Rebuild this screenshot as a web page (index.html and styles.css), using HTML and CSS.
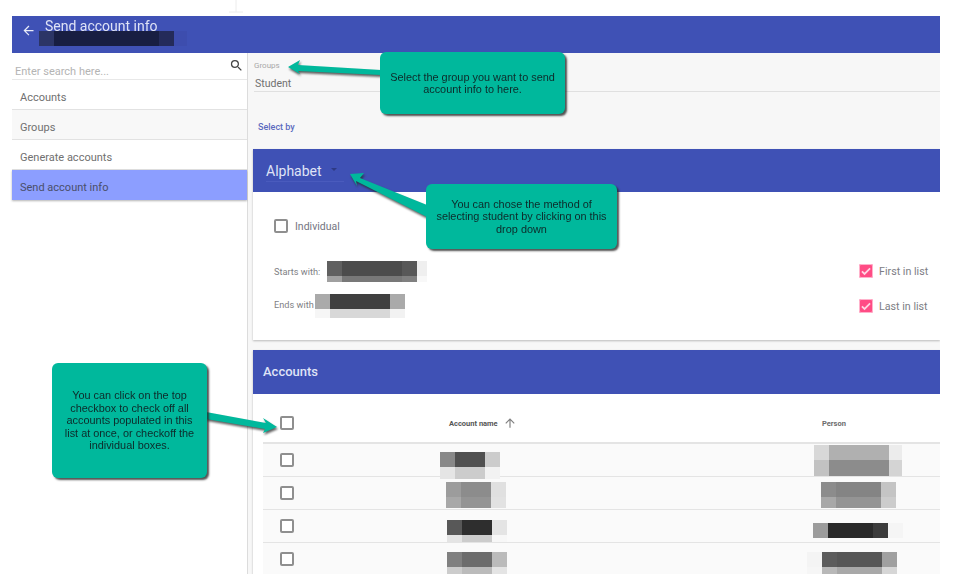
FILE: index.html
```html
<!DOCTYPE html>
<html lang="en">
<head>
<meta charset="utf-8">
<title>Send account info</title>
<link rel="stylesheet" href="styles.css">
</head>
<body>
<div class="page">
  <div class="app">
    <header class="topbar">
      <svg class="back" viewBox="0 0 24 24" width="15" height="15"><path d="M20 11H7.8l5.6-5.6L12 4l-8 8 8 8 1.4-1.4L7.8 13H20z"/></svg>
      <div class="topbar-title">
        <div class="title">Send account info</div>
        <div class="mosaic m-head"><i class="h1"></i><i class="h2"></i><i class="h3"></i><i class="h4"></i></div>
      </div>
    </header>
    <div class="layout">
      <aside class="sidebar">
        <div class="search">
          <span class="search-hint">Enter search here...</span>
          <svg viewBox="0 0 24 24" width="15" height="15"><path d="M15.5 14h-.79l-.28-.27A6.471 6.471 0 0 0 16 9.5 6.5 6.5 0 1 0 9.5 16c1.61 0 3.09-.59 4.23-1.57l.27.28v.79l5 4.99L20.49 19l-4.99-5zm-6 0C7.01 14 5 11.99 5 9.5S7.01 5 9.5 5 14 7.01 14 9.5 11.99 14 9.5 14z"/></svg>
        </div>
        <nav>
          <div class="nav-item">Accounts</div>
          <div class="nav-item nav-alt">Groups</div>
          <div class="nav-item">Generate accounts</div>
          <div class="nav-item nav-active">Send account info</div>
        </nav>
      </aside>
      <main class="main">
        <section class="group-field">
          <div class="field-label">Groups</div>
          <div class="field-value">Student</div>
        </section>
        <div class="select-by">Select by</div>
        <section class="card card-filter">
          <div class="card-head head-alpha">
            <div class="dropdown"><span>Alphabet</span><i class="caret"></i></div>
          </div>
          <div class="filter-body">
            <label class="check-row"><i class="box"></i><span>Individual</span></label>
            <div class="range-row row-first">
              <div class="range-left">
                <span class="range-label">Starts with:</span>
                <div class="mosaic m-start">
                  <i class="g60"></i><i class="g4c"></i><i class="g58"></i><i class="gef"></i>
                  <i class="ga0"></i><i class="g78"></i><i class="g80"></i><i class="gf8"></i>
                </div>
              </div>
              <label class="pink-row"><i class="pink"><svg viewBox="0 0 24 24"><path d="M5 12.5l4.5 4.5L19 7.5"/></svg></i><span>First in list</span></label>
            </div>
            <div class="range-row row-last">
              <div class="range-left">
                <span class="range-label">Ends with</span>
                <div class="mosaic m-end">
                  <i class="gaa"></i><i class="g40"></i><i class="gaa"></i>
                  <i class="gf6"></i><i class="gd8"></i><i class="gf2"></i>
                </div>
              </div>
              <label class="pink-row"><i class="pink"><svg viewBox="0 0 24 24"><path d="M5 12.5l4.5 4.5L19 7.5"/></svg></i><span>Last in list</span></label>
            </div>
          </div>
        </section>
        <section class="card card-accounts">
          <div class="card-head head-accounts">Accounts</div>
          <div class="table">
            <div class="tr th">
              <i class="box"></i>
              <div class="name-cell"><span>Account name</span><svg viewBox="0 0 24 24" width="14" height="14"><path d="M4 12l1.4 1.4L11 7.8V20h2V7.8l5.6 5.6L20 12l-8-8z"/></svg></div>
              <div class="person-cell">Person</div>
            </div>
            <div class="tr">
              <i class="box"></i>
              <div class="mosaic mn mn1"><i class="g88"></i><i class="g50"></i><i class="g50"></i><i class="gcc"></i><i class="ge5"></i><i class="gcc"></i><i class="gcc"></i><i class="gf2"></i></div>
              <div class="mosaic mp mp1"><i class="gd8"></i><i class="gb0"></i><i class="gec"></i><i class="gc2"></i><i class="g8c"></i><i class="gd4"></i></div>
            </div>
            <div class="tr">
              <i class="box"></i>
              <div class="mosaic mn mn2"><i class="g9c"></i><i class="g8c"></i><i class="g8c"></i><i class="ge0"></i><i class="ga8"></i><i class="g94"></i><i class="g94"></i><i class="ge2"></i></div>
              <div class="mosaic mp mp2"><i class="g8c"></i><i class="g84"></i><i class="gc4"></i><i class="ga8"></i><i class="g94"></i><i class="gcc"></i></div>
            </div>
            <div class="tr">
              <i class="box"></i>
              <div class="mosaic mn mn3"><i class="g58"></i><i class="g2e"></i><i class="g2e"></i><i class="ge4"></i><i class="ge4"></i><i class="gcc"></i><i class="gcc"></i><i class="gf7"></i></div>
              <div class="mosaic mp mp3"><i class="g9c"></i><i class="g2a"></i><i class="g3c"></i><i class="gf5"></i></div>
            </div>
            <div class="tr">
              <i class="box"></i>
              <div class="mosaic mn mn4"><i class="g80"></i><i class="g6c"></i><i class="g6c"></i><i class="gbb"></i><i class="gcc"></i><i class="gbb"></i><i class="gbb"></i><i class="ge4"></i></div>
              <div class="mosaic mp mp4"><i class="gf4"></i><i class="g5c"></i><i class="g56"></i><i class="ga0"></i><i class="gf6"></i><i class="gb8"></i><i class="ga8"></i><i class="gd6"></i></div>
            </div>
          </div>
        </section>
      </main>
    </div>
  </div>

  <svg class="arrows" viewBox="0 0 956 580" width="956" height="580">
    <path class="stem" d="M236 0V12M229 12H243"/>
    <polygon class="arrow" points="288,67 300,60 298,65 381,70 381,75 298,71 300,74"/>
    <polygon class="arrow" points="350,174 364,173 360,178 427,205 427,217 356,181 357,186"/>
    <polygon class="arrow" points="206,412 266,423 263,418 277,427 263,433 265,429 206,419"/>
  </svg>
  <div class="callout callout-group">Select the group you want to send<br>account info to here.</div>
  <div class="callout callout-method">You can chose the method of<br>selecting student by clicking on this<br>drop down</div>
  <div class="callout callout-top">You can click on the top<br>checkbox to check off all<br>accounts populated in this<br>list at once, or checkoff the<br>individual boxes.</div>
</div>
</body>
</html>
```

FILE: styles.css
```css
* { box-sizing: border-box; }
html, body { margin: 0; padding: 0; background: #fff; }
body { font-family: Roboto, "Liberation Sans", sans-serif; color: #616161; }
i { display: block; font-style: normal; }

.page { position: relative; width: 956px; height: 580px; overflow: hidden; }
.app { margin: 16px 16px 0 12px; height: 558px; display: flex; flex-direction: column; filter: blur(.5px); }

/* top bar */
.topbar { height: 37px; flex: none; background: #3f51b5; display: flex; align-items: flex-start; padding-left: 9px; }
.back { fill: #e8ebf8; margin-top: 7px; flex: none; }
.topbar-title { margin-left: 3px; position: relative; }
.title { font-size: 14px; line-height: 16px; color: #dfe3f6; margin: 2px 0 0 6px; }
.m-head { grid-template-columns: 15px 105px 15px 13px; grid-template-rows: 15px; margin-top: -3px; }
.h1 { background: #2c3566; } .h2 { background: #181e42; } .h3 { background: #242b5a; } .h4 { background: #3d4dae; }

.layout { flex: 1; min-height: 0; display: flex; }

/* sidebar */
.sidebar { width: 236px; flex: none; background: #fff; border-right: 1px solid #dcdcdc; }
.search { height: 27px; display: flex; align-items: flex-start; justify-content: space-between; padding: 0 3px 0 3px; border-bottom: 1px solid #e8e8e8; }
.search-hint { font-size: 11px; line-height: 14px; color: #b4b4b4; margin-top: 12px; }
.search svg { fill: #444; margin-top: 5px; }
.nav-item { height: 30px; display: flex; align-items: center; padding: 5px 0 0 8px; font-size: 11px; color: #707070; border-bottom: 1px solid #e2e2e2; }
.nav-alt { background: #f8f8f8; }
.nav-active { height: 30px; padding-top: 4px; background: #8c9eff; color: #4a4f6a; border-bottom: 0; box-shadow: 0 1px 2px rgba(0,0,0,.3); }

/* main */
.main { flex: 1; min-width: 0; background: #f7f7f7; padding-left: 5px; overflow: hidden; }
.group-field { margin: 0 0 0 1px; height: 39px; border-bottom: 1px solid #e0e0e0; padding-top: 8px; }
.field-label { font-size: 8px; line-height: 10px; color: #a8a8a8; }
.field-value { font-size: 10.5px; line-height: 14px; color: #707070; margin-top: 6px; padding-left: 1px; }
.select-by { font-size: 9px; font-weight: 500; line-height: 12px; color: #5c6bc0; margin: 29px 0 0 5px; height: 28px; }

.card { background: #fff; box-shadow: 0 1px 2px rgba(0,0,0,.25); }
.card-head { background: #3f51b5; color: #dfe3f6; display: flex; align-items: center; }
.head-alpha { height: 43px; padding-left: 13px; }
.dropdown { display: flex; align-items: center; width: 78px; height: 22px; font-size: 14px; border-bottom: 1px solid #4a5bbd; margin-top: 1px; }
.caret { width: 0; height: 0; margin: 0 0 0 9px; border: 3px solid transparent; border-top-color: #2e3a84; }

.card-filter { height: 191px; }
.filter-body { position: relative; padding: 27px 12px 0 21px; }
.box { width: 14px; height: 14px; flex: none; border: 2px solid #8f8f8f; border-radius: 2px; background: #fff; }
.check-row { display: flex; align-items: center; gap: 7px; font-size: 10.5px; color: #74757f; }
.range-row { display: flex; justify-content: space-between; align-items: center; }
.row-first { margin-top: 27px; height: 22px; }
.row-last { margin-top: 12px; height: 24px; }
.range-left { display: flex; align-items: flex-start; }
.range-label { font-size: 9.2px; line-height: 12px; color: #7f7f85; white-space: nowrap; }
.row-first .range-label { margin-top: 5px; }
.row-last .range-label { margin-top: 4px; }
.pink-row { display: flex; align-items: center; gap: 6px; font-size: 10.7px; color: #7c7d84; width: 69px; white-space: nowrap; }
.pink { width: 14px; height: 14px; flex: none; border-radius: 2px; background: #ff4c85; box-shadow: 0 0 0 1px #ffb3cc inset; }
.pink svg { display: block; fill: none; stroke: #ffd5e3; stroke-width: 3; }

/* pixelated redactions */
.mosaic { display: grid; flex: none; }
.m-start { grid-template-columns: 15px 60px 15px 10px; grid-template-rows: 15px 6px; margin-left: 7px; }
.m-end { grid-template-columns: 15px 60px 15px; grid-template-rows: 15px 9px; margin-left: 1px; margin-top: -1px; }
.g2a { background: #2a2a2a; } .g2e { background: #2e2e2e; } .g3c { background: #3c3c3c; } .g40 { background: #404040; }
.g4c { background: #4c4c4c; } .g50 { background: #505050; } .g56 { background: #565656; } .g58 { background: #585858; }
.g5c { background: #5c5c5c; } .g60 { background: #606060; } .g6c { background: #6c6c6c; } .g78 { background: #787878; }
.g80 { background: #808080; } .g84 { background: #848484; } .g88 { background: #888; } .g8c { background: #8c8c8c; }
.g94 { background: #949494; } .g9c { background: #9c9c9c; } .ga0 { background: #a0a0a0; } .ga8 { background: #a8a8a8; }
.gaa { background: #aaa; } .gb0 { background: #b0b0b0; } .gb8 { background: #b8b8b8; } .gbb { background: #bbb; }
.gc2 { background: #c2c2c2; } .gc4 { background: #c4c4c4; } .gcc { background: #ccc; } .gd4 { background: #d4d4d4; }
.gd6 { background: #d6d6d6; } .gd8 { background: #d8d8d8; } .ge0 { background: #e0e0e0; } .ge2 { background: #e2e2e2; }
.ge4 { background: #e4e4e4; } .ge5 { background: #e5e5e5; } .gec { background: #ececec; } .gef { background: #efefef; }
.gf2 { background: #f2f2f2; } .gf4 { background: #f4f4f4; } .gf5 { background: #f5f5f5; } .gf6 { background: #f6f6f6; }
.gf7 { background: #f7f7f7; } .gf8 { background: #f8f8f8; }

/* accounts table */
.card-accounts { margin-top: 10px; height: 240px; }
.head-accounts { height: 44px; padding: 0 0 2px 10px; font-size: 13px; font-weight: 500; }
.table { padding-left: 10px; background: #fff; }
.tr { height: 33px; display: flex; align-items: flex-start; background: #fafafa; border-bottom: 1px solid #e4e4e4; padding-left: 17px; }
.tr .box { margin-top: 9px; }
.th { height: 50px; align-items: center; background: #fff; border-bottom: 2px solid #e4e4e4; }
.th .box { margin-top: 10px; }
.name-cell { display: flex; align-items: center; gap: 5px; margin-left: 155px; width: 373px; font-size: 7.5px; font-weight: 700; color: #555; margin-top: 10px; }
.name-cell svg { fill: #808080; }
.person-cell { font-size: 7.5px; font-weight: 700; color: #6c6c6c; margin-top: 10px; }

.mn { grid-template-columns: repeat(4, 15px); width: 60px; }
.mn1 { grid-template-rows: 15px 12px; margin: 8px 0 0 146px; }
.mn2 { grid-template-rows: 15px 11px; margin: 5px 0 0 152px; }
.mn3 { grid-template-rows: 15px 7px; margin: 10px 0 0 153px; }
.mn4 { grid-template-rows: 15px 8px; margin: 9px 0 0 153px; }
.mp1 { grid-template-columns: 15px 60px 13px; grid-template-rows: 15px 16px; margin: 1px 0 0 314px; }
.mp2 { grid-template-columns: 15px 45px 15px; grid-template-rows: 15px 11px; margin: 5px 0 0 315px; }
.mp3 { grid-template-columns: 15px 45px 15px 15px; grid-template-rows: 15px; margin: 13px 0 0 306px; }
.mp4 { grid-template-columns: 15px 15px 45px 15px; grid-template-rows: 15px 8px; margin: 9px 0 0 300px; }

/* annotations laid over the screenshot */
.arrows { position: absolute; left: 0; top: 0; pointer-events: none; }
.arrow { fill: #00b89c; filter: drop-shadow(1px 2px 1px rgba(40,40,40,.75)); }
.stem { fill: none; stroke: #ececec; stroke-width: 1; }
.callout { position: absolute; display: flex; align-items: center; justify-content: center; text-align: center; background: #00b89c; border-radius: 6px; box-shadow: 2px 2px 2px rgba(40,40,40,.8); font-family: "Liberation Sans", Arial, sans-serif; font-size: 10.9px; line-height: 12.4px; color: #0d2a2a; filter: blur(.4px); }
.callout-group { left: 380px; top: 52px; width: 185px; height: 62px; }
.callout-method { left: 426px; top: 184px; width: 191px; height: 65px; }
.callout-top { left: 52px; top: 363px; width: 155px; height: 115px; }
```
